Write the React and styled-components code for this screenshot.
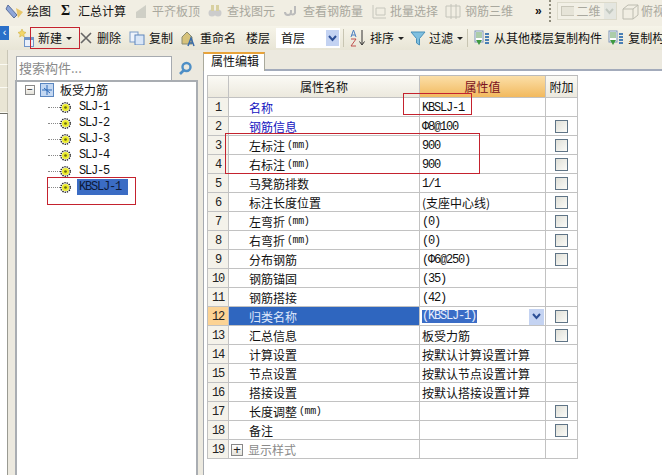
import React from "react";
import styled, { createGlobalStyle } from "styled-components";

const Global = createGlobalStyle`
  html, body { margin: 0; padding: 0; background: #fff; }
  * { box-sizing: border-box; }
`;
const CJK = `"Noto Sans CJK SC", "Liberation Sans", sans-serif`;
const MONO = `"Liberation Mono", "Noto Sans CJK SC", monospace`;

const Page = styled.div`
  position: relative;
  width: 662px;
  height: 475px;
  overflow: hidden;
  font: 12px/14px ${CJK};
  color: #111;
  background: #fff;
  display: flex;
  flex-direction: column;
`;
const TopBar = styled.div`
  height: 26px;
  flex: none;
  display: flex;
  align-items: center;
  padding: 0 0 4px 5px;
  background: #f1eee3;
  white-space: nowrap;
`;
const SubBar = styled.div`
  height: 24px;
  flex: none;
  display: flex;
  align-items: center;
  background: linear-gradient(#f6f4e9, #e8e5d6);
  white-space: nowrap;
`;
const Collapse = styled.span`
  flex: none;
  align-self: flex-start;
  width: 9px;
  height: 14px;
  margin-right: 9px;
  color: #fff;
  font: 11px/13px "Liberation Sans", sans-serif;
  text-align: center;
  background: #2b70c9;
`;
const Tool = styled.span`
  display: inline-flex;
  align-items: center;
  flex: none;
  gap: ${p => p.$gap ?? 3}px;
  margin-right: ${p => p.$mr ?? 7}px;
  color: ${p => (p.$off ? "#a9a89e" : "#111")};
`;
const Sigma = styled.b`
  width: 9px;
  font: bold 14px/14px "Liberation Serif", serif;
`;
const Caret = styled.i`
  display: inline-block;
  flex: none;
  width: 6px;
  height: 0;
  margin-right: ${p => p.$mr ?? 0}px;
  border: 3px solid transparent;
  border-top: 3px solid #222;
  border-bottom: 0;
`;
const Sep = styled.span`
  flex: none;
  width: 1px;
  height: 18px;
  margin: 0 ${p => p.$r ?? 6}px 0 ${p => p.$l ?? 3}px;
  background: #c8c5b2;
`;
const Grip = styled.span`
  flex: none;
  width: 2px;
  height: 22px;
  margin: 0 6px;
  background: repeating-linear-gradient(#8f8c7c 0 2px, transparent 2px 4px);
`;
const Chevrons = styled.span`
  flex: none;
  width: 8px;
  margin-left: 22px;
  font: bold 12px/12px "Liberation Sans", sans-serif;
`;
const TopSelect = styled.span`
  flex: none;
  width: 60px;
  height: 18px;
  margin-right: 4px;
  display: flex;
  align-items: center;
  gap: 3px;
  padding-left: 3px;
  color: #a9a89e;
  background: #f2f0e6;
  border: 1px solid #dcdacb;
`;
const TopSelectArrow = styled.span`
  margin-left: auto;
  width: 14px;
  height: 16px;
  display: flex;
  align-items: center;
  justify-content: center;
  background: #e4e6e0;
`;
const FloorSelect = styled.span`
  flex: none;
  width: 64px;
  height: 20px;
  margin: 0 3px 0 6px;
  padding-left: 5px;
  display: flex;
  align-items: center;
  justify-content: space-between;
  background: #fff;
`;
const SelectArrow = styled.span`
  width: 13px;
  height: 16px;
  margin-right: 1px;
  display: flex;
  align-items: center;
  justify-content: center;
  background: #c4d3f2;
`;
const Body = styled.div`
  flex: 1;
  min-height: 0;
  display: flex;
  background: #ece9df;
`;
const Strip = styled.div`
  width: 8px;
  flex: none;
  display: flex;
  flex-direction: column;
`;
const StripCell = styled.div`
  flex: none;
  height: ${p => p.$h}px;
  background: #e9e5d4;
  border-bottom: 1px solid #fbfaf3;
  border-right: 1px solid #c9c6b6;
`;
const StripRest = styled.div`
  flex: 1;
  background: #fff;
  border-top: 1px solid #6e6e66;
  border-right: 1px solid #9a9a92;
`;
const LeftPane = styled.div`
  width: 183px;
  flex: none;
  margin: 6px 0 0 7px;
  display: flex;
  flex-direction: column;
`;
const Search = styled.div`
  height: 24px;
  flex: none;
  padding-left: 1px;
  display: flex;
`;
const SearchInput = styled.span`
  flex: 1;
  padding: 4px 0 0 2px;
  color: #8a8a8a;
  font-size: 13px;
  background: #fff;
  border: 1px solid #a6aab0;
  border-bottom: 0;
`;
const SearchBtn = styled.span`
  width: 26px;
  flex: none;
  display: flex;
  align-items: center;
  justify-content: center;
`;
const Tree = styled.div`
  flex: 1;
  padding-left: 8px;
  background: #fff;
  border: 2px solid #a9adb2;
  border-bottom: 0;
`;
const TreeRoot = styled.div`
  height: 16px;
  margin-bottom: 1px;
  display: flex;
  align-items: center;
  gap: 5px;
`;
const PlusBox = styled.span`
  width: 10px;
  height: 10px;
  flex: none;
  display: flex;
  align-items: center;
  justify-content: center;
  border: 1px solid #888;
  font: 10px/8px "Liberation Sans", sans-serif;
  color: #222;
  background: linear-gradient(#fff, #e4e2da);
`;
const TreeNode = styled.div`
  height: 16px;
  margin-left: 23px;
  display: flex;
  align-items: center;
  font: 12px/16px ${MONO};
  letter-spacing: -1.2px;
`;
const Dots = styled.span`
  width: 12px;
  flex: none;
  border-top: 1px dotted #888;
`;
const NodeLabel = styled.span`
  margin-left: 6px;
  padding: 0 ${p => (p.$sel ? 7 : 0)}px 0 2px;
  line-height: 16px;
  color: ${p => (p.$sel ? "#0d1a3a" : "#111")};
  background: ${p => (p.$sel ? "#3b6cc4" : "transparent")};
`;
const Splitter = styled.div`
  width: 5px;
  flex: none;
`;
const RightPane = styled.div`
  flex: 1;
  min-width: 0;
  display: flex;
  flex-direction: column;
  margin-top: 2px;
`;
const Tabs = styled.div`
  height: 19px;
  flex: none;
  display: flex;
  align-items: flex-end;
  border-bottom: 2px solid #a3abbb;
`;
const Tab = styled.span`
  width: 62px;
  height: 19px;
  margin-bottom: -2px;
  padding: 0 0 0 7px;
  background: #fff;
  border: 1px solid #a9a99c;
  border-top: 2px solid #e8a33a;
  border-bottom: 0;
  color: #111;
`;
const Sheet = styled.div`
  flex: 1;
  padding: 4px 0 0 3px;
  background: #fff;
  border-left: 1px solid #a6aab0;
`;
const Grid = styled.div`
  width: 371px;
  display: grid;
  grid-template-columns: 21px 191px 126px 32px;
  grid-template-rows: 22px repeat(19, 19px);
  border-top: 1px solid #bbb;
  border-left: 1px solid #c0c0c0;
`;
const Head = styled.div`
  display: flex;
  align-items: center;
  justify-content: center;
  color: ${p => (p.$val ? "#7a1020" : "#111")};
  background: ${p => (p.$val ? "linear-gradient(#fbdfa8, #f2b95e)" : "linear-gradient(#fbfaf5, #ece9de)")};
  border-right: 1px solid #c2c2c2;
  border-bottom: 1px solid #c2c2c2;
`;
const Num = styled.div`
  display: flex;
  align-items: center;
  justify-content: center;
  padding-top: 1px;
  color: #222;
  font: 12px/14px ${MONO};
  letter-spacing: -1.2px;
  background: ${p => (p.$sel ? "#fcd394" : "#f4f2ea")};
  border-right: 1px solid #c2c2c2;
  border-bottom: 1px solid #c2c2c2;
`;
const Cell = styled.div`
  display: flex;
  align-items: center;
  min-width: 0;
  padding-top: 1px;
  padding-left: ${p => p.$pad ?? 2}px;
  border-right: 1px solid #c2c2c2;
  border-bottom: 1px solid #c2c2c2;
  background: ${p => (p.$sel ? "#2f66bf" : "#fff")};
  color: ${p => (p.$sel ? "#dfe8fb" : p.$link ? "#1414c0" : p.$muted ? "#8a8a8a" : "#111")};
`;
const Unit = styled.span`
  font: 10px/14px ${MONO};
  letter-spacing: -0.4px;
  margin-left: 2px;
`;
const ValueText = styled.span`
  font: 12px/14px ${MONO};
  letter-spacing: -1.2px;
  color: #111;
`;
const EditValue = styled.div`
  flex: 1;
  height: 100%;
  display: flex;
  align-items: center;
  justify-content: space-between;
  padding-right: 1px;
`;
const EditText = styled.span`
  padding: 0 1px 0 0;
  color: #e8eefc;
  background: #3a6cc6;
  font: 12px/13px ${MONO};
  letter-spacing: -1.2px;
`;
const ComboBtn = styled(SelectArrow)`
  width: 15px;
  margin: 0;
`;
const Check = styled.span`
  width: 13px;
  height: 13px;
  margin-left: 9px;
  flex: none;
  border: 1px solid #5f7486;
  background: linear-gradient(135deg, #e0e0d8, #fbfbf8);
`;
const Expander = styled(PlusBox)`
  width: 12px;
  height: 12px;
  margin: 0 5px 0 2px;
  font-size: 13px;
`;
const Mark = styled.div`
  position: absolute;
  border: 1px solid #c4222e;
  pointer-events: none;
  left: ${p => p.$x}px;
  top: ${p => p.$y}px;
  width: ${p => p.$w}px;
  height: ${p => p.$h}px;
`;

const Gear = () => (
  <svg width="11" height="11" viewBox="0 0 13 13">
    <circle cx="6.5" cy="6.5" r="5.6" fill="none" stroke="#222" strokeWidth="1.7" strokeDasharray="1.6 1.1" />
    <circle cx="6.5" cy="6.5" r="4.2" fill="#ecec2c" />
    <circle cx="6.5" cy="6.5" r="1.6" fill="#6b6b10" />
  </svg>
);
const NewDoc = () => (
  <svg width="16" height="18" viewBox="0 0 16 18">
    <path d="M4 0l1.2 2.6L8 3.5 5.8 5.4 6.4 8 4 6.6 1.6 8l.6-2.6L0 3.5l2.8-.9z" fill="#f2d668" stroke="#c9a93a" strokeWidth=".5" />
    <rect x="6.5" y="8.5" width="9" height="9" fill="#eaf0fa" stroke="#6f94c8" />
    <rect x="6.5" y="8.5" width="9" height="2.5" fill="#6f94c8" />
  </svg>
);
const Stack = () => (
  <svg width="16" height="17" viewBox="0 0 16 17">
    <rect x="1" y="1" width="8" height="11" fill="#fff" stroke="#7a93b8" />
    <path d="M2 3h6M2 5h6M2 7h6" stroke="#5a9a55" />
    <path d="M2 10l3 5 3-5z" fill="#3f9a3f" />
    <path d="M11 4h4M11 7h4M11 10h4M11 13h4" stroke="#4a7fb5" strokeWidth="2" />
  </svg>
);
const Arrow = ({ c = "#2c4f96" }) => (
  <svg width="9" height="7" viewBox="0 0 9 7">
    <path d="M1 1l3.5 4L8 1" fill="none" stroke={c} strokeWidth="2" />
  </svg>
);
const TopIcon = ({ w = 16, children }) => (
  <svg width={w} height="17" viewBox={`0 0 ${w} 17`} fill="none">
    {children}
  </svg>
);

const rows = [
  ["名称", "KBSLJ-1", 0, { link: 1, mono: 1 }],
  ["钢筋信息", "Φ8@100", 1, { link: 1, mono: 1 }],
  ["左标注", "900", 1, { unit: 1, mono: 1 }],
  ["右标注", "900", 1, { unit: 1, mono: 1 }],
  ["马凳筋排数", "1/1", 1, { mono: 1 }],
  ["标注长度位置", "(支座中心线)", 1, {}],
  ["左弯折", "(0)", 1, { unit: 1, mono: 1 }],
  ["右弯折", "(0)", 1, { unit: 1, mono: 1 }],
  ["分布钢筋", "(Φ6@250)", 1, { mono: 1 }],
  ["钢筋锚固", "(35)", 0, { mono: 1 }],
  ["钢筋搭接", "(42)", 0, { mono: 1 }],
  ["归类名称", "(KBSLJ-1)", 1, { sel: 1 }],
  ["汇总信息", "板受力筋", 1, {}],
  ["计算设置", "按默认计算设置计算", 0, {}],
  ["节点设置", "按默认节点设置计算", 0, {}],
  ["搭接设置", "按默认搭接设置计算", 0, {}],
  ["长度调整", "", 1, { unit: 1 }],
  ["备注", "", 1, {}],
  ["显示样式", "", 0, { group: 1 }],
];

export default function App() {
  return (
    <Page>
      <Global />
      <TopBar>
        <Tool $mr={10} $gap={3}>
          <TopIcon w={19}>
            <path d="M3 2l9 10-3 3L1 6z" fill="#8ea6d8" stroke="#5a6f9c" />
            <path d="M11 5l7 4-5 6z" fill="#e8c66a" />
          </TopIcon>
          绘图
        </Tool>
        <Tool $mr={8} $gap={8}>
          <Sigma>Σ</Sigma>汇总计算
        </Tool>
        <Tool $off $mr={8} $gap={2}>
          <TopIcon><path d="M2 15V9l10-7v13z" fill="#cfcfc6" /></TopIcon>平齐板顶
        </Tool>
        <Tool $off $mr={8} $gap={5}>
          <TopIcon w={14}><circle cx="4" cy="10" r="3.5" fill="#ccc" /><circle cx="10" cy="10" r="3.5" fill="#ccc" /><path d="M3 2h3v6H3zM8 2h3v6H8z" fill="#d8d0a0" /></TopIcon>查找图元
        </Tool>
        <Tool $off $mr={8} $gap={6}>
          <TopIcon w={14}><path d="M2 9a3 3 0 0 0 6 0V7M12 3v7a3 3 0 0 1-4 1" stroke="#bbb" strokeWidth="2" /></TopIcon>查看钢筋量
        </Tool>
        <Tool $off $mr={7} $gap={3}>
          <TopIcon><path d="M2 2v13h13M5 5h9v7H5z" stroke="#c6c6bc" /></TopIcon>批量选择
        </Tool>
        <Tool $off $mr={0} $gap={4}>
          <TopIcon><path d="M1 3h14v11H1zM6 1v15M11 1v15" stroke="#c4c4ba" /></TopIcon>钢筋三维
        </Tool>
        <Chevrons>»</Chevrons>
        <Grip />
        <TopSelect>
          <svg width="14" height="10"><rect x=".5" y=".5" width="13" height="9" fill="#e6e4d8" stroke="#c9c7ba" /></svg>
          二维
          <TopSelectArrow><Arrow c="#c2c8c0" /></TopSelectArrow>
        </TopSelect>
        <Tool $off $gap={1} $mr={0}>
          <TopIcon w={19}><path d="M2 6l5-4h10v10l-5 4H2zM2 6h10v10M12 6l5-4" stroke="#bdbcb0" /></TopIcon>俯视
        </Tool>
      </TopBar>
      <SubBar>
        <Collapse>‹</Collapse>
        <Tool $mr={4} $gap={4}><NewDoc />新建</Tool>
        <Caret $mr={8} />
        <Tool $mr={8} $gap={5}>
          <svg width="12" height="12" viewBox="0 0 12 12"><path d="M1 1l10 10M11 1L1 11" stroke="#666" strokeWidth="1.6" /></svg>删除
        </Tool>
        <Tool $mr={7} $gap={4}>
          <svg width="16" height="14" viewBox="0 0 16 14"><rect x="1" y="1" width="8" height="10" fill="#eef3fb" stroke="#7a9bc8" /><rect x="6" y="4" width="9" height="10" fill="#d9e6f7" stroke="#5f86bb" /></svg>复制
        </Tool>
        <Tool $mr={10} $gap={4}>
          <svg width="16" height="17" viewBox="0 0 16 17"><path d="M2 14V7l5-5 5 5v7z" fill="#d6c27a" stroke="#8c8c70" /><path d="M8 16l3-8 3 8M9 13h4" stroke="#3a6ca8" strokeWidth="1.5" fill="none" /></svg>重命名
        </Tool>
        <Tool $mr={0}>楼层</Tool>
        <FloorSelect>首层<SelectArrow><Arrow /></SelectArrow></FloorSelect>
        <Sep $l={0} $r={6} />
        <Tool $mr={4} $gap={4}>
          <svg width="16" height="18" viewBox="0 0 16 18"><path d="M1 8l2.5-7L6 8M1.8 6h3.4" stroke="#4a7fc0" fill="none" /><path d="M1 10h5l-5 7h5" stroke="#c0504d" fill="none" /><path d="M12 1v14M9.5 12.5L12 16l2.5-3.5" stroke="#333" fill="none" /></svg>排序
        </Tool>
        <Caret $mr={6} />
        <Tool $mr={4} $gap={3}>
          <svg width="16" height="16" viewBox="0 0 16 16"><path d="M1 2h14L9.5 8.5V15l-3-2V8.5z" fill="#7fc0e0" stroke="#4a90b8" /></svg>过滤
        </Tool>
        <Caret />
        <Sep $l={4} $r={6} />
        <Tool $mr={6} $gap={4}><Stack />从其他楼层复制构件</Tool>
        <Tool $mr={0} $gap={4}><Stack />复制构件</Tool>
      </SubBar>
      <Body>
        <Strip>
          <StripCell $h={15} />
          <StripCell $h={23} />
          <StripCell $h={25} />
          <StripRest />
        </Strip>
        <LeftPane>
          <Search>
            <SearchInput>搜索构件...</SearchInput>
            <SearchBtn>
              <svg width="15" height="15" viewBox="0 0 15 15"><circle cx="8.5" cy="6" r="4" fill="none" stroke="#4e8fc6" strokeWidth="2.4" /><path d="M5.5 9.5L2 13" stroke="#4e8fc6" strokeWidth="2.6" /></svg>
            </SearchBtn>
          </Search>
          <Tree>
            <TreeRoot>
              <PlusBox>−</PlusBox>
              <svg width="15" height="14" viewBox="0 0 15 14"><rect x=".5" y=".5" width="13" height="13" fill="#c4d8f2" stroke="#5a86c0" /><path d="M2 7h10M7 2v10M4 5l6 5" stroke="#2e6ab8" /></svg>
              板受力筋
            </TreeRoot>
            {["SLJ-1", "SLJ-2", "SLJ-3", "SLJ-4", "SLJ-5", "KBSLJ-1"].map((n, i) => (
              <TreeNode key={n}>
                <Dots />
                <Gear />
                <NodeLabel $sel={i === 5}>{n}</NodeLabel>
              </TreeNode>
            ))}
          </Tree>
        </LeftPane>
        <Splitter />
        <RightPane>
          <Tabs><Tab>属性编辑</Tab></Tabs>
          <Sheet>
            <Grid>
              <Head />
              <Head>属性名称</Head>
              <Head $val>属性值</Head>
              <Head>附加</Head>
              {rows.map(([name, value, check, o], i) => (
                <React.Fragment key={name}>
                  <Num $sel={o.sel}>{i + 1}</Num>
                  <Cell $pad={o.group ? 0 : 20} $sel={o.sel} $link={o.link} $muted={o.group}>
                    {o.group && <Expander>+</Expander>}
                    <span>{name}</span>
                    {o.unit && <Unit>(mm)</Unit>}
                  </Cell>
                  <Cell>
                    {o.sel ? (
                      <EditValue>
                        <EditText>{value}</EditText>
                        <ComboBtn><Arrow /></ComboBtn>
                      </EditValue>
                    ) : o.mono ? (
                      <ValueText>{value}</ValueText>
                    ) : (
                      <span>{value}</span>
                    )}
                  </Cell>
                  <Cell $pad={0}>{!!check && <Check />}</Cell>
                </React.Fragment>
              ))}
            </Grid>
          </Sheet>
        </RightPane>
      </Body>
      <Mark $x={30} $y={27} $w={50} $h={22} />
      <Mark $x={47} $y={177} $w={89} $h={28} />
      <Mark $x={403} $y={93} $w={69} $h={22} />
      <Mark $x={225} $y={133} $w={255} $h={41} />
    </Page>
  );
}
